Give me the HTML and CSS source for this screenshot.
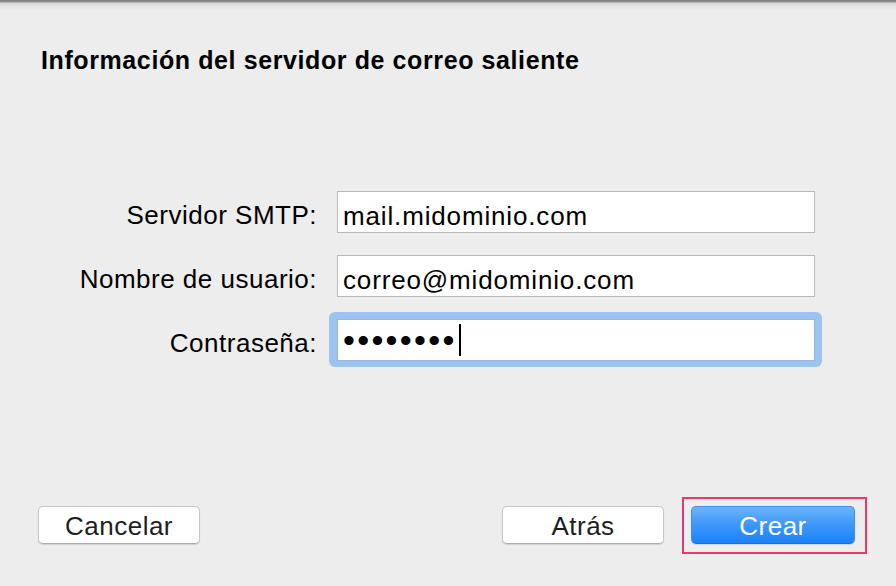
FILE: index.html
```html
<!DOCTYPE html>
<html>
   <head>
      <meta charset="utf-8">
      <link rel="stylesheet" href="styles.css">
   </head>
   <body>
      <div class="sheet">
         <div class="topbar"></div>

         <h1 class="title">Información del servidor de correo saliente</h1>

         <!--
         Account fields
         -->
         <div class="form">
            <div class="row">
               <label class="label">Servidor SMTP:</label>
               <div class="field">mail.midominio.com</div>
            </div>
            <div class="row">
               <label class="label">Nombre de usuario:</label>
               <div class="field">correo@midominio.com</div>
            </div>
            <div class="row">
               <label class="label">Contraseña:</label>
               <div class="focus-ring">
                  <div class="field password"><span class="dots">••••••••</span><span class="caret"></span></div>
               </div>
            </div>
         </div>

         <!--
         Buttons
         -->
         <div class="footer">
            <button class="btn">Cancelar</button>
            <div class="spacer"></div>
            <button class="btn">Atrás</button>
            <button class="btn primary">Crear</button>
         </div>
      </div>
   </body>
</html>
```

FILE: styles.css
```css
body {
   margin : 0;
   background : #ededed;
   font-family : "Liberation Sans", Arial, Helvetica, sans-serif;
   color : #000;
}

.sheet {
   height : 586px;
   display : flex;
   flex-direction : column;
}

.topbar {
   height : 10px;
   background : linear-gradient(to bottom, #7f7f7f 0px, #8d8d8d 2px, #d6d6d6 3px, #e6e6e6 7px, #ededed 10px);
}

.title {
   margin : 36px 0 0 41px;
   font-size : 25px;
   line-height : 28px;
   font-weight : bold;
   letter-spacing : 0.6px;
}

.form {
   margin-top : 117px;
   display : flex;
   flex-direction : column;
   gap : 22px;
}

.row {
   display : grid;
   grid-template-columns : 317px 478px;
   column-gap : 20px;
   height : 42px;
   align-items : start;
}

.label {
   text-align : right;
   font-size : 26px;
   line-height : 30px;
   padding-top : 9px;
   letter-spacing : 0.5px;
}

.field {
   box-sizing : border-box;
   height : 42px;
   background : #fff;
   border : 1px solid #b9b9b9;
   padding : 9px 0 0 5px;
   font-size : 26px;
   line-height : 30px;
   letter-spacing : 0.85px;
   white-space : nowrap;
}

.focus-ring {
   margin : -7px 0 0 -8px;
   width : 478px;
   padding : 7px 7px 6px 8px;
   background : #9cc4f0;
   border-radius : 6px;
}

.password {
   border-color : #9fb6d3;
   display : flex;
   align-items : center;
   padding : 0 0 0 5px;
}

.dots {
   font-size : 34px;
   line-height : 30px;
   letter-spacing : 2.3px;
}

.caret {
   width : 2px;
   height : 32px;
   margin-left : 2px;
   background : #000;
}

.footer {
   margin-top : 145px;
   display : flex;
   align-items : center;
   padding : 0 41px 0 38px;
}

.spacer {
   flex : 1;
}

.btn {
   box-sizing : border-box;
   width : 162px;
   height : 38px;
   border : 1px solid #c6c6c6;
   border-bottom-color : #acacac;
   border-radius : 5px;
   background : #fff;
   box-shadow : 0 1px 1px rgba(0, 0, 0, 0.12);
   font-family : inherit;
   font-size : 26px;
   line-height : 30px;
   letter-spacing : 0.5px;
   color : #1e1e1e;
   padding : 2px 0 0 0;
}

.primary {
   position : relative;
   width : 164px;
   margin-left : 27px;
   color : #fff;
   border-color : #3d8ef0;
   border-bottom-color : #1c6fd8;
   background : linear-gradient(to bottom, #6db4fa, #3d97f9 50%, #1a82fb);
}

/* highlight box drawn around the primary button */
.primary::after {
   content : "";
   position : absolute;
   left : -10px;
   right : -13px;
   top : -10px;
   bottom : -11px;
   border : 2px solid #e8386c;
}
```
